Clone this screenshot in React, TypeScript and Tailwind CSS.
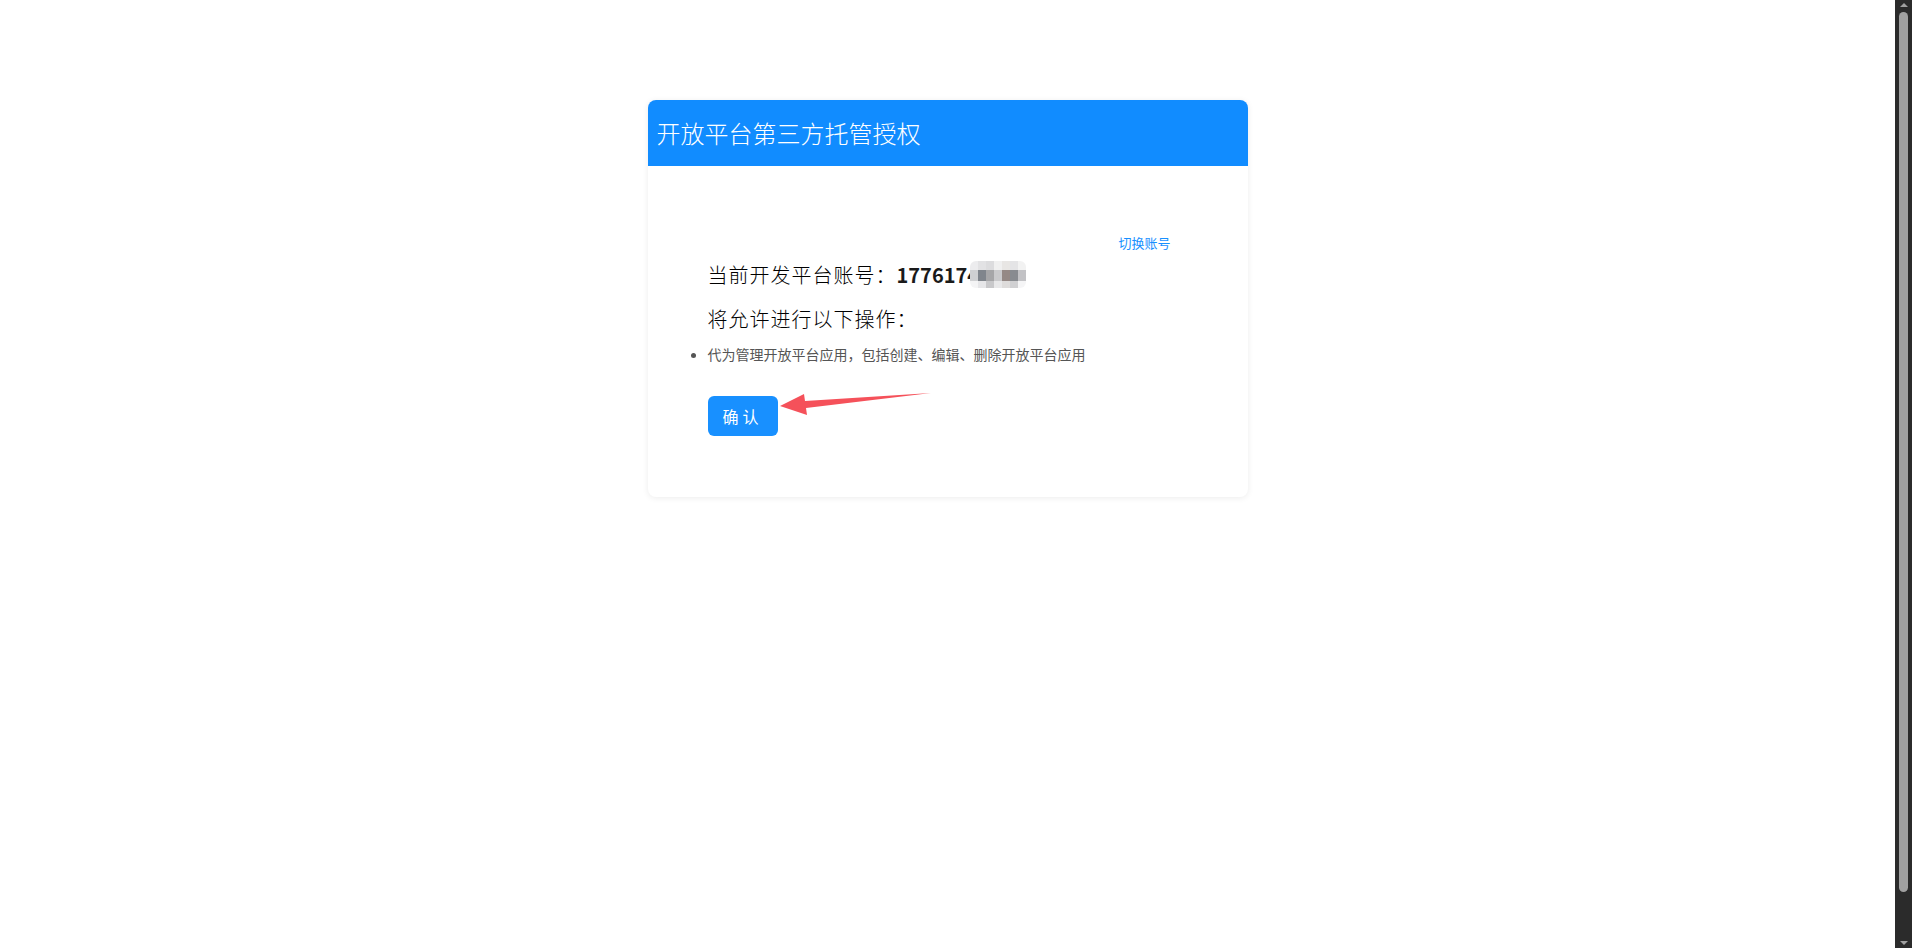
import React from 'react';

const cjk = { fontFamily: '"Noto Sans CJK SC", "Noto Sans", sans-serif' };

const mosaic = [
  { h: 'h-[9px]', cells: ['#ececee', '#e2e2e4', '#dcdcde', '#f0f0f0', '#e8e6e4', '#e4e4e6', '#f2f2f2'] },
  { h: 'h-[11px]', cells: ['#cfd0d2', '#80858c', '#a6a6a8', '#cacacc', '#958985', '#888b90', '#c2c2c5'] },
  { h: 'h-[7px]', cells: ['#f4f4f5', '#e6e6e8', '#c8c8ca', '#e8e8e9', '#dedcdb', '#d0d0d2', '#f5f5f6'] },
];

const Mosaic: React.FC = () => (
  <span className="absolute left-[calc(100%-9px)] top-[1px] flex flex-col overflow-hidden rounded-[6px]">
    {mosaic.map((row, i) => (
      <span key={i} className="flex">
        {row.cells.map((c, j) => (
          <span key={j} className={`block w-[8px] ${row.h}`} style={{ backgroundColor: c }} />
        ))}
      </span>
    ))}
  </span>
);

const Arrow: React.FC = () => (
  <svg className="absolute left-[72px] top-[-3px]" width="160" height="30" viewBox="0 0 160 30">
    <path d="M0 13 L24 1 L25 8 L151 0 L26 15 L27 22 Z" fill="#f5515a" />
  </svg>
);

export default function App() {
  return (
    <div className="flex h-screen bg-white" style={cjk}>
      <div className="flex-1 pt-[100px]">
        <div className="mx-auto w-[600px] overflow-hidden rounded-lg bg-white shadow-[0_1px_6px_rgba(0,0,0,0.08)]">
          <div className="flex h-[66px] items-center bg-[#118cff] px-[9px]">
            <h1 className="text-[24px] font-light leading-none text-white">开放平台第三方托管授权</h1>
          </div>

          <div className="pb-[61px] pl-[60px] pr-[77px] pt-[68px]">
            <div className="text-right text-[13px] leading-[18px]">
              <a className="cursor-pointer text-[#1890ff]">切换账号</a>
            </div>

            <p className="mt-[9px] text-[20px] font-light leading-[28px] tracking-[1px] text-black">
              当前开发平台账号：
              <span className="font-bold tracking-normal text-[#1a1a1a]">
                177617
                <span className="relative">
                  4
                  <Mosaic />
                </span>
              </span>
            </p>
            <p className="mt-[16px] text-[20px] font-light leading-[28px] tracking-[1px] text-black">
              将允许进行以下操作：
            </p>

            <ul className="mt-[11px] list-disc text-[14px] leading-[20px] text-[#555]">
              <li>代为管理开放平台应用，包括创建、编辑、删除开放平台应用</li>
            </ul>

            <div className="relative mt-[32px]">
              <button className="h-[40px] rounded-md bg-[#1890ff] px-[15px] text-[16px] tracking-[4px] text-white">
                确认
              </button>
              <Arrow />
            </div>
          </div>
        </div>
      </div>

      {/* scrollbar strip */}
      <div className="flex w-[17px] flex-col items-center bg-[#2b2b2b] py-[3px]">
        <span className="h-0 w-0 border-x-[4px] border-b-[4px] border-x-transparent border-b-[#a0a0a0]" />
        <div className="mt-[5px] w-[9px] flex-[0_0_880px] rounded-full bg-[#a0a0a0]" />
        <div className="flex-1" />
        <span className="h-0 w-0 border-x-[4px] border-t-[4px] border-x-transparent border-t-[#a0a0a0]" />
      </div>
    </div>
  );
}
